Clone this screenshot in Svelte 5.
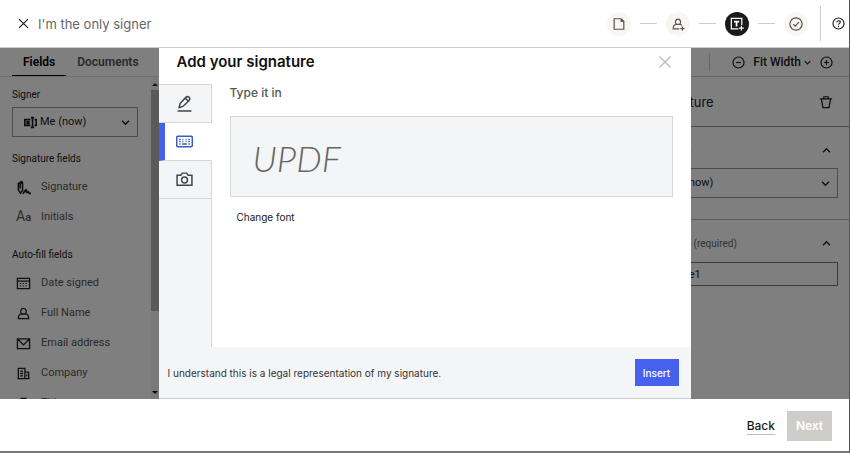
<script lang="ts">
  type Field = { icon: string; label: string };

  const signatureFields: Field[] = [
    { icon: 'sign', label: 'Signature' },
    { icon: 'initials', label: 'Initials' }
  ];

  const autoFields: Field[] = [
    { icon: 'calendar', label: 'Date signed' },
    { icon: 'person', label: 'Full Name' },
    { icon: 'mail', label: 'Email address' },
    { icon: 'company', label: 'Company' },
    { icon: 'briefcase', label: 'Title' }
  ];

  const steps = [
    { icon: 'file', label: 'Files' },
    { icon: 'personAdd', label: 'Signers' },
    { icon: 'textField', label: 'Fields' },
    { icon: 'check', label: 'Review' }
  ];

  const methods = [
    { icon: 'pen', label: 'Draw it in' },
    { icon: 'keyboard', label: 'Type it in' },
    { icon: 'camera', label: 'Upload image' }
  ];

  let currentStep = $state(2);
  let method = $state(1);
  let signature = $state('UPDF');
  let fieldName = $state('Signature1');
</script>

{#snippet icon(name: string, size = 16)}
  <svg class="icon" width={size} height={size} viewBox="0 0 16 16" aria-hidden="true">
    {#if name === 'close'}
      <path d="M2.5 2.5l11 11M13.5 2.5l-11 11" />
    {:else if name === 'chevronDown'}
      <path class="heavy" d="M3 5.5l5 5 5-5" />
    {:else if name === 'chevronUp'}
      <path class="heavy" d="M3 10.5l5-5 5 5" />
    {:else if name === 'sign'}
      <path class="bold" d="M2 3.5h5.5M2.500 3v7.500L4.700 14 7 11V3.500C7 1.500 4.500 1 4.500 3v6" />
      <path class="heavy" d="M7 14.200c1.500 0 2.500-3.700 3.700-3.700 1 0-.2 2.800 1 2.800.8 0 1.200-.8 1.800-.3l.8 1.200h1.700" />
    {:else if name === 'calendar'}
      <path d="M1.500 2.500h13v11h-13zM1.500 5.500h13" />
      <path d="M4 8h8M4 10.500h8" stroke-width="1" stroke-dasharray="1.500 1.500" />
    {:else if name === 'person' || name === 'personAdd'}
      <path d="M6 8.500C4.300 6.500 4.800 2.500 8 2.500s3.700 4 2 6" />
      {#if name === 'person'}
        <path d="M6 8.500c-2.700.2-3.500 1.500-3.500 5h11c0-3.500-.8-4.800-3.500-5z" />
      {:else}
        <path d="M9.500 13.500h-7c0-3.500.8-4.800 3.500-5h4c1.200.1 2 .5 2.500 1.200M13 10.800v4.700M10.700 13.200h4.700" />
      {/if}
    {:else if name === 'mail'}
      <path d="M1.500 3h13v10.500h-13zM2 3.500l6 6 6-6" />
    {:else if name === 'company'}
      <path d="M2.500 13.500v-11h7v11M1.500 13.500h13M9.500 6.500h4v7M4.500 5.500h3M4.500 8h3M4.500 10.500h3M11.500 9v2" />
    {:else if name === 'briefcase'}
      <path d="M1.500 5h13v8.500h-13zM5.500 5V2.500h5V5M1.500 8.500h13" />
    {:else if name === 'file'}
      <path d="M2.500 2H10.500L13.500 5V14H2.500zM10.500 2v3h3" />
    {:else if name === 'textField'}
      <path d="M9.500 13.500h-8v-12h12v7.500M13 10v5.500M10.200 12.800h5.600" />
      <path class="heavy" d="M4.500 5.300h6M7.500 5.300v5.500" />
    {:else if name === 'check'}
      <circle cx="8" cy="8" r="7" />
      <path d="M4.800 8.200l2.300 2.300 4.200-4.700" />
    {:else if name === 'help'}
      <circle cx="8" cy="8" r="6.800" />
      <path d="M5.800 6.800c0-3 4.400-2.800 4.400-.5C10.200 8 8 7.700 8 9.400M8 10.800v1.400" />
    {:else if name === 'minus'}
      <circle cx="8" cy="8" r="6.800" />
      <path d="M5 8h6" />
    {:else if name === 'plus'}
      <circle cx="8" cy="8" r="6.800" />
      <path d="M5 8h6M8 5v6" />
    {:else if name === 'trash'}
      <path d="M1 4.500h14M5.500 4.500V2h5v2.500M2.800 4.500l1.700 10h7l1.700-10" />
    {:else if name === 'pen'}
      <path d="M3 12l.8-4L9.500 2c1.500-1.500 4.500.5 3 3l-6 5.800zM8.800 3l3 2.800M1.500 15h13" />
    {:else if name === 'keyboard'}
      <rect x="0.700" y="3" width="14.600" height="10" rx="1" />
      <path d="M3 6h1.500M6 6h1M9 6h1M11.500 6h1.500M3 8h1.500M6 8h1M9 8h1M11.500 8h1.500M3 10.300h1.300M5.700 10.300h4.600M11.700 10.300h1.300" />
    {:else if name === 'camera'}
      <path d="M1 4h3.500L6 2h4l1.500 2H15v9.500H1z" />
      <circle cx="8" cy="8.500" r="2.800" />
    {:else if name === 'assignee'}
      <path class="heavy" d="M8 4.500H1v7h7M3 7h4M3 9h4M8.500 2h4M10.500 2v12M8.500 14h4M13 4.500h2v7h-2" />
    {/if}
  </svg>
{/snippet}

{#snippet fieldList(fields: Field[])}
  <ul class="fields">
    {#each fields as field (field.label)}
      <li>
        <button class="field">
          {#if field.icon === 'initials'}
            <span class="initials" aria-hidden="true">A<small>a</small></span>
          {:else}
            {@render icon(field.icon, 15)}
          {/if}
          {field.label}
        </button>
      </li>
    {/each}
  </ul>
{/snippet}

<div class="page">
  <header class="topbar">
    <button class="plain dark" aria-label="Close">{@render icon('close', 13)}</button>
    <h1>I'm the only signer</h1>
    <ol class="steps">
      {#each steps as step, i (step.label)}
        <li>
          <button
            class="step"
            class:current={i === currentStep}
            aria-label={step.label}
            onclick={() => (currentStep = i)}
          >
            {@render icon(step.icon, 14)}
          </button>
        </li>
      {/each}
    </ol>
    <div class="help">
      <button class="plain dark" aria-label="Help">{@render icon('help', 13)}</button>
    </div>
  </header>

  <main class="workspace">
    <aside class="sidebar">
      <nav class="tabs">
        <button class="active">Fields</button>
        <button>Documents</button>
      </nav>
      <div class="scroller">
        <div class="sidebar-content">
          <label for="signer">Signer</label>
          <div class="select">
            {@render icon('assignee', 13)}
            <select id="signer">
              <option>Me (now)</option>
            </select>
            {@render icon('chevronDown', 11)}
          </div>
          <h2>Signature fields</h2>
          {@render fieldList(signatureFields)}
          <h2>Auto-fill fields</h2>
          {@render fieldList(autoFields)}
        </div>
        <div class="scrollbar" aria-hidden="true">
          <span class="arrow up"></span>
          <span class="thumb"></span>
          <span class="arrow down"></span>
        </div>
      </div>
    </aside>

    <section class="inspector">
      <div class="zoom">
        <button class="plain dark" aria-label="Zoom out">{@render icon('minus', 13)}</button>
        <button class="fit">Fit Width {@render icon('chevronDown', 9)}</button>
        <button class="plain dark" aria-label="Zoom in">{@render icon('plus', 13)}</button>
      </div>
      <div class="inspector-title">
        {@render icon('sign', 15)}
        <span>Signature</span>
        <button class="plain dark" aria-label="Delete">{@render icon('trash', 14)}</button>
      </div>
      <div class="group">
        <div class="group-head">
          <label for="assigned">Assigned to</label>
          {@render icon('chevronUp', 11)}
        </div>
        <div class="select">
          {@render icon('assignee', 13)}
          <select id="assigned">
            <option>Me (now)</option>
          </select>
          {@render icon('chevronDown', 11)}
        </div>
      </div>
      <div class="group last">
        <div class="group-head">
          <label for="field-name">Field name <small>(required)</small></label>
          {@render icon('chevronUp', 11)}
        </div>
        <input id="field-name" type="text" bind:value={fieldName} />
      </div>
    </section>

    <div class="backdrop">
      <div class="modal" role="dialog" aria-labelledby="modal-title">
        <div class="modal-head">
          <h2 id="modal-title">Add your signature</h2>
          <button class="plain" aria-label="Close dialog">{@render icon('close', 16)}</button>
        </div>
        <div class="modal-body">
          <div class="methods">
            {#each methods as item, i (item.label)}
              <button
                class="method"
                class:selected={i === method}
                aria-label={item.label}
                onclick={() => (method = i)}
              >
                {@render icon(item.icon, 17)}
              </button>
            {/each}
          </div>
          <div class="type-in">
            <label for="signature">Type it in</label>
            <input id="signature" type="text" bind:value={signature} />
            <button class="change">Change font</button>
          </div>
        </div>
        <div class="modal-foot">
          <p>I understand this is a legal representation of my signature.</p>
          <button class="insert">Insert</button>
        </div>
      </div>
    </div>
  </main>

  <footer class="actions">
    <a href="#back">Back</a>
    <button class="next" disabled>Next</button>
  </footer>
</div>

<style>
  :global(body) {
    background: #fff;
  }

  .page {
    display: flex;
    flex-direction: column;
    box-sizing: border-box;
    height: 100vh;
    border-right: 1px solid #555;
    border-bottom: 2px solid #777;
    font-family: Roboto, 'Liberation Sans', sans-serif;
    font-size: 11px;
    line-height: 16px;
    color: #1a1a1a;
    overflow: hidden;
  }

  .page :global(*) {
    box-sizing: border-box;
  }

  button,
  input,
  select {
    margin: 0;
    padding: 0;
    border: 0;
    border-radius: 0;
    background: none;
    font: inherit;
    color: inherit;
  }

  h1,
  h2,
  p,
  ul,
  ol {
    margin: 0;
    padding: 0;
    list-style: none;
    font-weight: 400;
  }

  .icon {
    flex: none;
    display: block;
    fill: none;
    stroke: currentColor;
    stroke-width: 1.4;
  }

  .heavy {
    stroke-width: 2;
  }

  .bold {
    stroke-width: 1.7;
  }

  .plain {
    display: flex;
    color: #bbb;
  }

  .plain.dark {
    color: #1a1a1a;
  }

  .topbar {
    flex: none;
    display: flex;
    align-items: center;
    height: 48px;
    padding-left: 17px;
    border-bottom: 1px solid #ccc;
  }

  h1 {
    flex: 1;
    margin-left: 8px;
    font-family: Inter, sans-serif;
    font-size: 13px;
    color: #666;
  }

  .steps {
    display: flex;
  }

  .steps li {
    display: flex;
    align-items: center;
  }

  .steps li + li::before {
    content: '';
    width: 17px;
    height: 1px;
    margin: 0 9px;
    background: #ccc;
  }

  .step {
    display: flex;
    align-items: center;
    justify-content: center;
    width: 24px;
    height: 24px;
    border-radius: 50%;
    background: #f7f6f3;
    color: #555;
  }

  .step.current {
    background: #1a1a1a;
    color: #fff;
  }

  .help {
    display: flex;
    align-items: center;
    height: 35px;
    margin-left: 12px;
    padding: 0 4px 0 11px;
    border-left: 1px solid #ccc;
  }

  .workspace {
    position: relative;
    flex: 1;
    min-height: 0;
    display: flex;
    justify-content: space-between;
    overflow: hidden;
  }

  .sidebar {
    display: flex;
    flex-direction: column;
    width: 159px;
  }

  .tabs {
    flex: none;
    display: flex;
    height: 29px;
    padding-left: 12px;
    border-bottom: 1px solid #ddd;
    font-size: 12px;
    font-weight: 600;
    color: #555;
  }

  .tabs button {
    padding: 0 11px;
  }

  .tabs .active {
    border-bottom: 1px solid #000;
    color: #000;
  }

  .scroller {
    flex: 1;
    min-height: 0;
    display: flex;
  }

  .sidebar-content {
    flex: 1;
    min-width: 0;
    padding: 10px 13px 0 12px;
    overflow: hidden;
  }

  .sidebar-content label,
  .sidebar-content h2 {
    display: block;
    font-size: 10px;
    line-height: 16px;
  }

  .sidebar-content h2 {
    margin-top: 14px;
  }

  .select {
    display: flex;
    align-items: center;
    height: 30px;
    margin-top: 4px;
    padding: 0 6px 0 11px;
    border: 1px solid #999;
  }

  .select select {
    flex: 1;
    min-width: 0;
    height: 28px;
    padding-left: 3px;
    appearance: none;
  }

  .fields {
    padding: 5px 0 1px;
  }

  .field {
    display: flex;
    align-items: center;
    gap: 10px;
    height: 30px;
    padding-left: 4px;
    color: #555;
  }

  .field .icon {
    color: #222;
  }

  .initials {
    width: 15px;
    font-size: 14px;
    text-align: left;
    white-space: nowrap;
  }

  .initials small {
    font-size: 11px;
    font-weight: 500;
  }

  .scrollbar {
    flex: none;
    display: flex;
    flex-direction: column;
    align-items: center;
    width: 8px;
    padding: 6px 0 5px;
    background: #f5f5f5;
  }

  .arrow {
    border: 3px solid transparent;
  }

  .arrow.up {
    border-top: 0;
    border-bottom-color: #333;
  }

  .arrow.down {
    margin-top: auto;
    border-bottom: 0;
    border-top-color: #111;
  }

  .thumb {
    width: 8px;
    height: 71%;
    margin-top: 4px;
    background: #b4b4b4;
  }

  .inspector {
    width: 238px;
    color: #222;
  }

  .zoom {
    display: flex;
    align-items: center;
    justify-content: flex-end;
    gap: 8px;
    height: 29px;
    padding-right: 16px;
    border-bottom: 1px solid #ccc;
  }

  .zoom::before {
    content: '';
    width: 1px;
    height: 18px;
    margin-right: 14px;
    background: #ccc;
  }

  .fit {
    display: flex;
    align-items: center;
    gap: 2px;
    font-size: 12px;
    font-weight: 500;
  }

  .inspector-title {
    display: flex;
    align-items: center;
    gap: 11px;
    height: 50px;
    padding: 0 16px 0 18px;
    border-bottom: 1px solid #999;
    font-family: Inter, sans-serif;
    font-size: 13px;
  }

  .inspector-title span {
    flex: 1;
  }

  .group {
    padding: 15px 11px 21px 17px;
    border-bottom: 1px solid #bbb;
  }

  .group.last {
    border-bottom: 0;
  }

  .group-head {
    display: flex;
    align-items: center;
    justify-content: space-between;
    padding-right: 6px;
    margin-bottom: 10px;
    font-size: 12px;
  }

  .group .select {
    margin-top: 0;
    padding-left: 22px;
  }

  .group-head small {
    margin-left: 4px;
    font-size: 10px;
    color: #666;
  }

  .group input {
    width: 100%;
    height: 24px;
    padding: 0 19px;
    border: 1px solid #777;
  }

  .backdrop {
    position: absolute;
    inset: 0;
    display: flex;
    justify-content: center;
    background: rgba(0, 0, 0, 0.5);
  }

  .modal {
    display: flex;
    flex-direction: column;
    width: 532px;
    background: #fff;
  }

  .modal-head {
    display: flex;
    align-items: center;
    justify-content: space-between;
    height: 36px;
    padding: 0 18px 8px;
  }

  .modal-head h2 {
    font-family: Inter, sans-serif;
    font-size: 15px;
    font-weight: 600;
    color: #111;
  }

  .modal-body {
    flex: 1;
    display: flex;
  }

  .methods {
    width: 53px;
    border-top: 1px solid #d5d7d9;
    border-right: 1px solid #d5d7d9;
    background: #f3f5f7;
  }

  .method {
    display: flex;
    align-items: center;
    justify-content: center;
    width: 52px;
    height: 38px;
    border-bottom: 1px solid #d5d7d9;
    color: #444;
  }

  .method.selected {
    width: 53px;
    padding-right: 7px;
    border-left: 6px solid #4561ee;
    background: #fff;
    color: #3d5abf;
  }

  .type-in {
    flex: 1;
    display: flex;
    flex-direction: column;
    align-items: flex-start;
    padding: 1px 18px;
  }

  .type-in label {
    font-family: Inter, sans-serif;
    font-size: 12px;
    font-weight: 500;
    color: #555;
  }

  .type-in input {
    width: 100%;
    height: 81px;
    margin: 15px 0 12px;
    padding: 2px 22px 0;
    border: 1px solid #d5d7d9;
    background: #f3f5f7;
    font-family: Lato, sans-serif;
    font-size: 36px;
    font-style: italic;
    font-weight: 300;
    color: #666;
  }

  .change {
    margin-left: 7px;
    font-family: Inter, sans-serif;
    font-size: 10px;
  }

  .modal-foot {
    display: flex;
    align-items: center;
    justify-content: space-between;
    height: 52px;
    padding: 0 12px 0 9px;
    border-bottom: 1px solid #ccc;
    background: #f3f5f7;
  }

  .modal-foot p {
    font-family: Inter, sans-serif;
    font-size: 10px;
    color: #333;
  }

  .insert {
    width: 44px;
    height: 27px;
    background: #4561ee;
    font-family: Inter, sans-serif;
    font-size: 10px;
    font-weight: 500;
    color: #fff;
  }

  .actions {
    flex: none;
    display: flex;
    align-items: center;
    justify-content: flex-end;
    gap: 12px;
    height: 52px;
    padding: 2px 17px 0 0;
    font-family: Inter, sans-serif;
    font-size: 12px;
    font-weight: 500;
  }

  .actions a {
    border-bottom: 1px solid #bbb;
    color: #1a1a1a;
    text-decoration: none;
  }

  .next {
    width: 45px;
    height: 30px;
    background: #cfcdc9;
    font-weight: 600;
    color: #fff;
  }
</style>
